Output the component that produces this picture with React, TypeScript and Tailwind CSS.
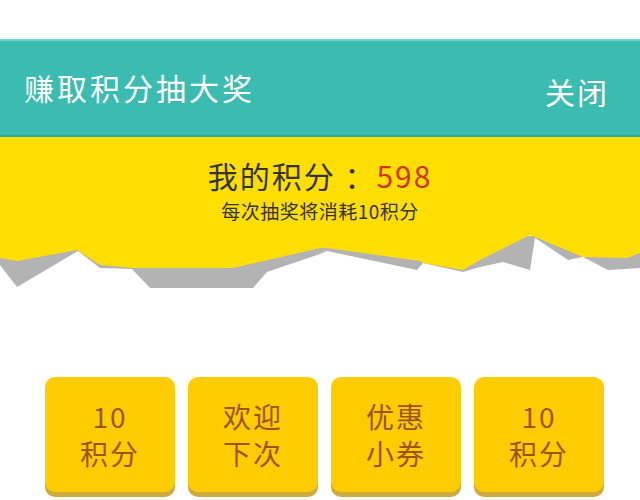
import React from 'react';

const font = '"Noto Sans CJK SC", "Noto Sans", sans-serif';

const prizes = [
  ['10', '积分'],
  ['欢迎', '下次'],
  ['优惠', '小券'],
  ['10', '积分'],
];

function TornEdge() {
  // torn paper bottom edge of the yellow panel, drawn in page coords y 230..290
  return (
    <svg width="640" height="60" viewBox="0 230 640 60" className="block">
      <polygon
        fill="#b3b3b3"
        points="0,236 640,236 640,268 608,270 583,257 568,260 535,238 530,270 503,262 480,267 463,272 423,263 417,270 327,251 320,254 267,272 253,288 150,288 132,269 100,268 78,251 17,287 0,265"
      />
      <polygon
        fill="#ffde00"
        points="0,230 640,230 640,253 627,258 583,257 535,237 530,235 480,260 463,270 423,263 420,261 327,248 320,248 233,268 133,268 100,265 77,250 17,261 0,258"
      />
    </svg>
  );
}

function PrizeCard({ lines }: { lines: string[] }) {
  return (
    <div className="flex h-[115px] w-[130px] flex-col items-center justify-center rounded-[10px] bg-[#ffcc00] text-[28px] leading-[37px] tracking-[2px] text-[#9e530e] shadow-[0_5px_0_#cfaa3c]">
      {lines.map((l, i) => (
        <span key={i}>{l}</span>
      ))}
    </div>
  );
}

export default function App() {
  return (
    <div className="h-[500px] w-[640px] overflow-hidden bg-white" style={{ fontFamily: font }}>
      <div className="h-[39px]" />
      <div className="flex h-[98px] items-center justify-between border-t-2 border-b-2 border-t-[#6fd2c7] border-b-[#32aa9e] bg-[#3abcb0] pl-[24px] pr-[31px] text-white">
        <span className="pb-[2px] text-[30px] tracking-[3px]">赚取积分抽大奖</span>
        <span className="pt-[6px] text-[30px] tracking-[2px]">关闭</span>
      </div>
      <div className="flex h-[93px] flex-col items-center bg-[#ffde00] pt-[18px] text-[#333333]">
        <div className="text-[30px] leading-[40px] tracking-[2px]">
          我的积分 ：<span className="text-[#d2321a]">598</span>
        </div>
        <div className="mt-[2px] text-[19px] leading-[28px] tracking-[0.5px]">每次抽奖将消耗10积分</div>
      </div>
      <TornEdge />
      <div className="mt-[87px] flex gap-[13px] pl-[45px]">
        {prizes.map((p, i) => (
          <PrizeCard key={i} lines={p} />
        ))}
      </div>
    </div>
  );
}
